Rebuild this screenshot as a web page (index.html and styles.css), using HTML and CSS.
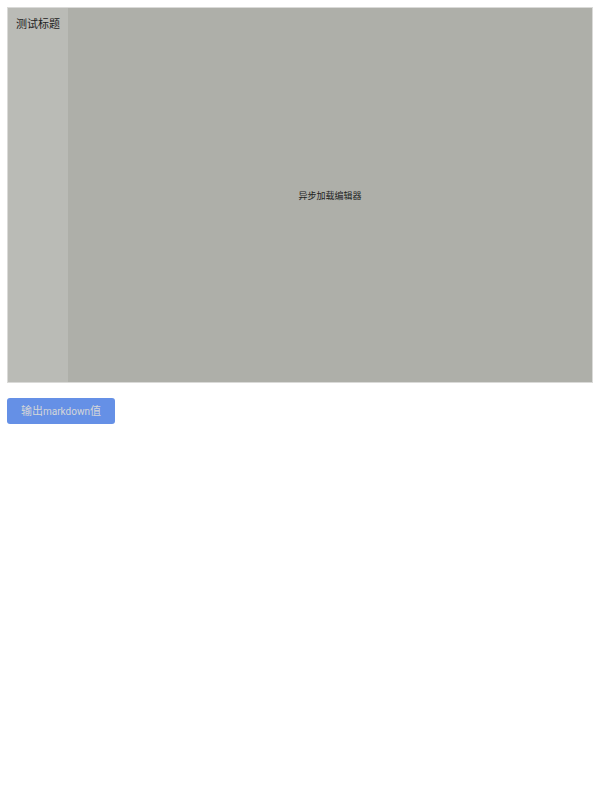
FILE: index.html
```html
<!DOCTYPE html>
<html lang="zh-CN">
<head>
<meta charset="utf-8">
<title>测试标题</title>
<link rel="stylesheet" href="styles.css">
</head>
<body>
<main class="page">
  <section class="editor">
    <nav class="sidebar"><h1 class="title">测试标题</h1></nav>
    <div class="loading">异步加载编辑器</div>
  </section>
  <button class="output" type="button">输出<span class="latin">markdown</span>值</button>
</main>
</body>
</html>
```
FILE: styles.css
```css
body {
  margin: 0;
  background: #fff;
  font-family: "Liberation Sans", "Noto Sans CJK SC", sans-serif;
}

.page {
  padding: 7px;
}

.editor {
  display: flex;
  min-height: 374px;
  border: 1px solid #dadad8;
  background: #aeafa9;
  color: #222;
}

.sidebar {
  flex: none;
  width: 60px;
  background: #babbb6;
}

.title {
  margin: 0;
  padding: 8px 0;
  font-size: 11px;
  font-weight: 400;
  line-height: 16px;
  text-align: center;
}

.loading {
  flex: 1;
  display: flex;
  align-items: center;
  justify-content: center;
  font-size: 9px;
}

.output {
  display: block;
  margin-top: 15px;
  padding: 0 14px;
  border: 0;
  border-radius: 3px;
  background: #6590e6;
  color: #d4d6d8;
  font: inherit;
  font-size: 11px;
  line-height: 26px;
}

.latin {
  font-family: Roboto, sans-serif;
  font-size: 10px;
  line-height: 1;
}
```
